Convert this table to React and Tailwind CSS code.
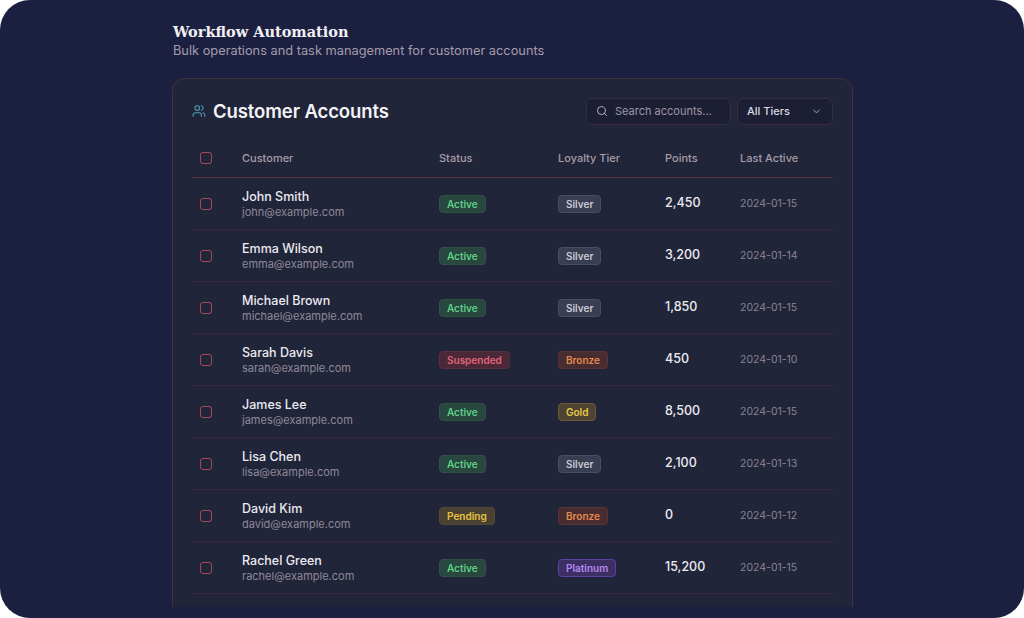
import React from 'react';
import { Users, Search, ChevronDown } from 'lucide-react';

const CUSTOMERS = [
  { name: 'John Smith', email: 'john@example.com', status: 'Active', tier: 'Silver', points: '2,450', last: '2024-01-15' },
  { name: 'Emma Wilson', email: 'emma@example.com', status: 'Active', tier: 'Silver', points: '3,200', last: '2024-01-14' },
  { name: 'Michael Brown', email: 'michael@example.com', status: 'Active', tier: 'Silver', points: '1,850', last: '2024-01-15' },
  { name: 'Sarah Davis', email: 'sarah@example.com', status: 'Suspended', tier: 'Bronze', points: '450', last: '2024-01-10' },
  { name: 'James Lee', email: 'james@example.com', status: 'Active', tier: 'Gold', points: '8,500', last: '2024-01-15' },
  { name: 'Lisa Chen', email: 'lisa@example.com', status: 'Active', tier: 'Silver', points: '2,100', last: '2024-01-13' },
  { name: 'David Kim', email: 'david@example.com', status: 'Pending', tier: 'Bronze', points: '0', last: '2024-01-12' },
  { name: 'Rachel Green', email: 'rachel@example.com', status: 'Active', tier: 'Platinum', points: '15,200', last: '2024-01-15' },
];

const STATUS_STYLES = {
  Active: 'bg-[#27473f] text-[#5fcf87] border-[#2f5245]',
  Suspended: 'bg-[#4a2838] text-[#e0667a] border-[#55303f]',
  Pending: 'bg-[#4a4132] text-[#e8c443] border-[#534936]',
};

const TIER_STYLES = {
  Silver: 'bg-[#3a3e52] text-[#c9cbd6] border-[#4a4e62]',
  Bronze: 'bg-[#472c30] text-[#e58a4e] border-[#5a3434]',
  Gold: 'bg-[#4d4431] text-[#eac84a] border-[#6b5c35]',
  Platinum: 'bg-[#3d2f63] text-[#b58af0] border-[#5a43a0]',
};

const GRID = 'grid grid-cols-[42px_197px_119px_107px_75px_1fr] items-center';

const Checkbox = () => (
  <div className="w-3 h-3 rounded-[3px] border-[1.5px] border-[#a8485c]" />
);

const Badge = ({ label, styles }) => (
  <span className={`px-[7px] py-[2px] rounded-[4px] border text-[10px] font-semibold leading-[12px] ${styles}`}>
    {label}
  </span>
);

export default function App() {
  return (
    <div className="bg-white w-[1024px] h-[618px]" style={{ fontFamily: 'Inter, "Noto Sans", sans-serif' }}>
      <div className="w-full h-full bg-[#1c2040] rounded-[30px] overflow-hidden">
        <div className="w-[681px] ml-[172px] pt-[22px]">
          <h1 className="text-[14.5px] font-bold text-[#f1eff4] leading-[20px] ml-px" style={{ fontFamily: '"DejaVu Serif", serif' }}>
            Workflow Automation
          </h1>
          <p className="text-[12.8px] text-[#a59cab] leading-[18px] ml-px">
            Bulk operations and task management for customer accounts
          </p>

          <div className="mt-[18px] h-[529px] overflow-hidden">
            <div className="bg-[#212539] border border-[#45303f] rounded-[12px] px-[19px] pt-[18px] pb-[24px]">
              {/* Header */}
              <div className="flex items-center justify-between">
                <div className="flex items-center gap-[7px]">
                  <Users size={14} className="text-[#4f9fb6]" strokeWidth={1.8} />
                  <h2 className="text-[18.5px] font-semibold text-[#f4f3f7] leading-[28px] tracking-[-0.1px]">Customer Accounts</h2>
                </div>
                <div className="flex items-center gap-[6px]">
                  <div className="w-[145px] h-[27px] rounded-[6px] bg-[#1c1f34] border border-[#3b2d3d] flex items-center pl-[9px] gap-[7px]">
                    <Search size={12} className="text-[#b4b0bd]" strokeWidth={2} />
                    <span className="text-[11px] text-[#9c95a5]">Search accounts...</span>
                  </div>
                  <div className="w-[96px] h-[27px] rounded-[6px] bg-[#1c1f34] border border-[#3b2d3d] flex items-center justify-between pl-[9px] pr-[10px]">
                    <span className="text-[11px] text-[#dcd9e2] font-medium">All Tiers</span>
                    <ChevronDown size={11} className="text-[#b4b0bd]" />
                  </div>
                </div>
              </div>

              {/* Table header */}
              <div className={`${GRID} mt-[14px] h-[39px] border-b border-[#5a3040] text-[11px] text-[#a89ca8] font-medium`}>
                <div className="pl-2"><Checkbox /></div>
                <div className="pl-2">Customer</div>
                <div className="pl-2">Status</div>
                <div className="pl-2">Loyalty Tier</div>
                <div className="pl-2">Points</div>
                <div className="pl-2">Last Active</div>
              </div>

              {/* Rows */}
              {CUSTOMERS.map((c) => (
                <div key={c.email} className={`${GRID} h-[52px] border-b border-[#362838]`}>
                  <div className="pl-2"><Checkbox /></div>
                  <div className="pl-2 flex flex-col pt-px">
                    <span className="text-[12.5px] font-medium text-[#eceaf1] leading-[17px]">{c.name}</span>
                    <span className="text-[11px] text-[#8f889a] leading-[15px]">{c.email}</span>
                  </div>
                  <div className="pl-2 flex"><Badge label={c.status} styles={STATUS_STYLES[c.status]} /></div>
                  <div className="pl-2 flex"><Badge label={c.tier} styles={TIER_STYLES[c.tier]} /></div>
                  <div className="pl-2 text-[12.5px] font-medium text-[#eceaf1]">{c.points}</div>
                  <div className="pl-2 text-[10.5px] text-[#8a8394]">{c.last}</div>
                </div>
              ))}
            </div>
          </div>
        </div>
      </div>
    </div>
  );
}
